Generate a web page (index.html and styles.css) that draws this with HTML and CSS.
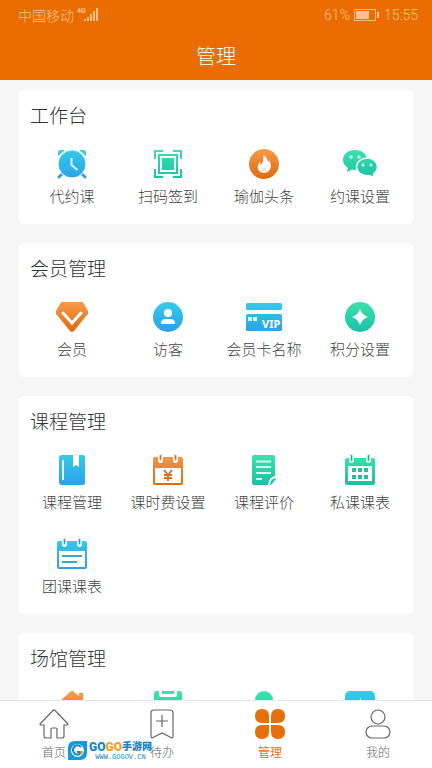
FILE: index.html
```html
<!DOCTYPE html>
<html lang="zh-CN">
<head>
<meta charset="utf-8">
<meta name="viewport" content="width=device-width, initial-scale=1">
<title>管理</title>
<link rel="stylesheet" href="styles.css">
</head>
<body>
<svg class="defs" width="0" height="0" aria-hidden="true">
  <defs>
    <linearGradient id="blue" x1="0" y1="0" x2="0" y2="32" gradientUnits="userSpaceOnUse"><stop offset="0" stop-color="#35cde6"/><stop offset="1" stop-color="#2c9fe8"/></linearGradient>
    <linearGradient id="green" x1="0" y1="0" x2="0" y2="32" gradientUnits="userSpaceOnUse"><stop offset="0" stop-color="#3de3ac"/><stop offset="1" stop-color="#16c1a6"/></linearGradient>
    <linearGradient id="orange" x1="0" y1="0" x2="0" y2="32" gradientUnits="userSpaceOnUse"><stop offset="0" stop-color="#f79c4b"/><stop offset="1" stop-color="#dc690d"/></linearGradient>
  </defs>
</svg>
<div class="app">
  <header class="header">
    <div class="status">
      <span class="carrier">中国移动</span>
      <span class="network">4G</span>
      <svg class="signal" width="14" height="14" viewBox="0 0 14 14" fill="currentColor" aria-hidden="true"><path d="M0 11h2v2H0zM3 9h2v4H3zM6 6h2v7H6zM9 3h2v10H9zM12 0h2v13h-2z"/></svg>
      <span class="percent">61%</span>
      <svg class="battery" width="25" height="12" viewBox="0 0 25 12" aria-hidden="true"><rect x=".5" y=".5" width="21" height="11" fill="none" stroke="currentColor"/><path d="M2 2h13v8H2zM23 3h2v6h-2z" fill="currentColor"/></svg>
      <span class="time">15:55</span>
    </div>
    <h1 class="title">管理</h1>
  </header>

  <main class="content">
    <section class="card">
      <h2>工作台</h2>
      <div class="grid">
        <button class="item" type="button">
          <svg class="icon" viewBox="0 0 32 32" aria-hidden="true"><path d="m7 25-4 4M25 25l4 4" stroke="#2fa6e6" stroke-width="3" stroke-linecap="round"/><path fill="url(#blue)" d="M2 8V5q0-3 3-3h4zM30 8V5q0-3-3-3h-4z"/><circle cx="16" cy="16" r="14" fill="url(#blue)" stroke="#fff"/><path d="M15.500 10v7l6 5" fill="none" stroke="#d8f6ff" stroke-width="2"/></svg>
          <span>代约课</span>
        </button>
        <button class="item" type="button">
          <svg class="icon" viewBox="0 0 32 32" aria-hidden="true"><g fill="none" stroke="url(#green)" stroke-width="2"><path d="M3 11V3h8M21 3h8v8M29 21v8h-8M11 29H3v-8"/><path d="M7 7h18v18H7z"/></g><path fill="url(#green)" d="M10 10h12v12H10z"/></svg>
          <span>扫码签到</span>
        </button>
        <button class="item" type="button">
          <svg class="icon" viewBox="0 0 32 32" aria-hidden="true"><circle cx="16" cy="16" r="15" fill="url(#orange)"/><path fill="#fff" d="M15.500 7q4 3 4.500 7 1-1 1-2 3 5 1 9-2 4-6 4t-6-4q-1-4 2-7 0 2 1 3 3-4 2.500-10z"/><path d="M14 24q-1-2 1-5 1 2 2.500 0 1.500 3 0 5z" fill="#fce2c4"/></svg>
          <span>瑜伽头条</span>
        </button>
        <button class="item" type="button">
          <svg class="icon icon-wide" viewBox="0 0 36 32" aria-hidden="true"><path fill="url(#green)" d="M13 2c7 0 12 4 12 10s-5 10-12 10l-3-.4L5 24l1-4c-3-2-5-5-5-8C1 6 6 2 13 2z"/><path fill="url(#green)" stroke="#fff" stroke-width="1.500" d="M25 10c6 0 10.500 4 10.500 9 0 3-1.500 5-4 7l1 4-5-2.500-2.500.2c-6 0-10.500-4-10.500-8.700S19 10 25 10z"/><g fill="#c9fff0"><circle cx="9" cy="9" r="1.800"/><circle cx="17" cy="9" r="1.800"/><circle cx="21" cy="17" r="1.500"/><circle cx="29" cy="17" r="1.500"/></g></svg>
          <span>约课设置</span>
        </button>
      </div>
    </section>

    <section class="card">
      <h2>会员管理</h2>
      <div class="grid">
        <button class="item" type="button">
          <svg class="icon" viewBox="0 0 32 32" aria-hidden="true"><path fill="url(#orange)" d="M6 1h20q1 0 2 2l4 7q1 2-1 4L18 30q-2 2-4 0L1 14q-2-2-1-4l4-7q1-2 2-2z"/><path d="m7 12 9 10 9-10" fill="none" stroke="#fff" stroke-width="3" stroke-linecap="round"/></svg>
          <span>会员</span>
        </button>
        <button class="item" type="button">
          <svg class="icon" viewBox="0 0 32 32" aria-hidden="true"><circle cx="16" cy="16" r="15" fill="url(#blue)"/><circle cx="16" cy="12" r="4" fill="#fff"/><path d="M9 23v-1q0-4 5-4h4q5 0 5 4v1z" fill="#fff"/></svg>
          <span>访客</span>
        </button>
        <button class="item" type="button">
          <svg class="icon icon-wide" viewBox="0 0 36 32" aria-hidden="true"><rect y="2" width="36" height="7" rx="1.500" fill="url(#blue)"/><rect y="13" width="36" height="17" rx="1.500" fill="url(#blue)"/><path fill="#d9f7ff" d="M2 16h4v4H2zM7 16h4v4H7z"/><text x="16" y="27" class="vip">VIP</text></svg>
          <span>会员卡名称</span>
        </button>
        <button class="item" type="button">
          <svg class="icon" viewBox="0 0 32 32" aria-hidden="true"><circle cx="16" cy="16" r="15" fill="url(#green)"/><path fill="#fff" d="M16 8q2 6 8 8-6 2-8 8-2-6-8-8 6-2 8-8z"/></svg>
          <span>积分设置</span>
        </button>
      </div>
    </section>

    <section class="card">
      <h2>课程管理</h2>
      <div class="grid">
        <button class="item" type="button">
          <svg class="icon" viewBox="0 0 32 32" aria-hidden="true"><path fill="url(#blue)" d="M6 1h11v12l3-2 3 2V1h4q2 0 2 2v26q0 2-2 2H6q-3 0-3-3V4q0-3 3-3z"/><path d="M7 6v20" stroke="#e2f8ff" stroke-width="2"/></svg>
          <span>课程管理</span>
        </button>
        <button class="item" type="button">
          <svg class="icon" viewBox="0 0 32 32" aria-hidden="true"><path fill="url(#orange)" fill-rule="evenodd" d="M3 3h3v3q0 3 2.500 3T11 6V3h10v3q0 3 2.500 3T26 6V3h3q2 0 2 2v24q0 2-2 2H3q-2 0-2-2V5q0-2 2-2zm0 11v15h26V14z"/><path d="M8 1h1v5H8zM23 1h1v5h-1z" stroke="#f6964a"/><path d="m12 16 4 5 4-5M12 21h8M12 24h8M16 21v6" fill="none" stroke="#cf752a" stroke-width="2"/></svg>
          <span>课时费设置</span>
        </button>
        <button class="item" type="button">
          <svg class="icon" viewBox="0 0 32 32" aria-hidden="true"><path fill="url(#green)" d="M6 1h19q2 0 2 2v19q-6 1-7 9H6q-2 0-2-2V3q0-2 2-2z"/><path fill="url(#green)" d="M28 24v1l-5 6h-1q0-6 6-7z"/><path d="M8 7.500h15M8 13h15M8 19h15M8 25h6" stroke="#d4fff1" stroke-width="2"/></svg>
          <span>课程评价</span>
        </button>
        <button class="item" type="button">
          <svg class="icon" viewBox="0 0 32 32" aria-hidden="true"><path fill="url(#green)" fill-rule="evenodd" d="M3 4h2v2q0 3 2.500 3T10 6V4h12v2q0 3 2.500 3T27 6V4h2q2 0 2 2v23q0 2-2 2H3q-2 0-2-2V6q0-2 2-2zm1 8v15h24V12z"/><path d="M7 1h1v6H7zM24 1h1v6h-1z" stroke="#38dfab"/><path fill="#2bbba0" d="M8 14h4v4H8zm6 0h4v4h-4zm6 0h4v4h-4zM8 21h4v4H8zm6 0h4v4h-4zm6 0h4v4h-4z"/></svg>
          <span>私课课表</span>
        </button>
        <button class="item" type="button">
          <svg class="icon" viewBox="0 0 32 32" aria-hidden="true"><path fill="url(#blue)" fill-rule="evenodd" d="M3 3h3v3q0 3 2.500 3T11 6V3h10v3q0 3 2.500 3T26 6V3h3q2 0 2 2v24q0 2-2 2H3q-2 0-2-2V5q0-2 2-2zm0 10v16h26V13z"/><path d="M8 1h1v5H8zM23 1h1v5h-1z" stroke="#35c9e6"/><path d="M6 18h20M6 24h15" stroke="#35a9cf" stroke-width="2"/></svg>
          <span>团课课表</span>
        </button>
      </div>
    </section>

    <section class="card">
      <h2>场馆管理</h2>
      <div class="grid">
        <button class="item" type="button" aria-label="场馆">
          <svg class="icon" viewBox="0 0 32 32" aria-hidden="true"><path fill="url(#orange)" d="M14.500.500q1.500-1 3 0L23 5V2h4v7l5 5h-3v17H3V14H0z"/></svg>
        </button>
        <button class="item" type="button" aria-label="登记">
          <svg class="icon" viewBox="0 0 32 32" aria-hidden="true"><path fill="url(#green)" d="M4 0h3v4q0 2 2 2h14q2 0 2-2V0h3q2 0 2 2v27q0 2-2 2H4q-2 0-2-2V2q0-2 2-2zM10 0h12v3H10z"/></svg>
        </button>
        <button class="item" type="button" aria-label="人员">
          <svg class="icon" viewBox="0 0 32 32" aria-hidden="true"><circle cx="16" cy="9" r="9" fill="url(#green)"/><path fill="url(#green)" d="M1 31q0-11 15-11t15 11z"/></svg>
        </button>
        <button class="item" type="button" aria-label="设置">
          <svg class="icon" viewBox="0 0 32 32" aria-hidden="true"><rect x="1" width="30" height="31" rx="5" fill="url(#blue)"/><path fill="#fff" d="m17 7-6 7h6z"/></svg>
        </button>
      </div>
    </section>
  </main>

  <nav class="tabs">
    <a class="tab" href="#home">
      <svg class="tab-icon" viewBox="0 0 30 30" aria-hidden="true"><path d="M14 1.500q1-1 2 0L29 15q0 1-1 1h-3v11q0 2-2 2h-5v-9q0-1-1-1h-4q-1 0-1 1v9H7q-2 0-2-2V16H2q-1 0-1-1z"/></svg>
      <span>首页</span>
    </a>
    <a class="tab" href="#todo">
      <svg class="tab-icon" viewBox="0 0 30 30" aria-hidden="true"><path d="M7 1h16q3 0 3 3v23q0 3-2 1.500L15 24l-9 4.500Q4 30 4 27V4q0-3 3-3zM9 12h12M15 6v12"/></svg>
      <span>待办</span>
    </a>
    <a class="tab active" href="#manage" aria-current="page">
      <svg class="tab-icon" viewBox="0 0 30 30" aria-hidden="true"><path d="M7 0q7 0 7 7v7H7q-7 0-7-7t7-7zM23 0q7 0 7 7t-7 7h-7V7q0-7 7-7zM7 16h7v7q0 7-7 7t-7-7 7-7zM16 16h7q7 0 7 7t-7 7-7-7z"/></svg>
      <span>管理</span>
    </a>
    <a class="tab" href="#me">
      <svg class="tab-icon" viewBox="0 0 30 30" aria-hidden="true"><circle cx="15" cy="8" r="7"/><rect x="3" y="17" width="24" height="12" rx="6"/></svg>
      <span>我的</span>
    </a>
    <div class="brand">
      <svg width="19" height="19" viewBox="0 0 19 19" aria-hidden="true"><path fill="#1598de" d="M7 0h12v12q0 7-7 7H0V7q0-7 7-7z"/><circle cx="9.500" cy="9.500" r="6.500" fill="#fff"/><path d="M13 6q-3-3-6-1-4 4 0 8 4 2 6-2H9" fill="none" stroke="#1685c7" stroke-width="2"/><path d="m12 10 4 1-3 3z" fill="#f5a01d"/></svg>
      <div class="brand-text">
        <div class="brand-name"><b>GO</b><b class="warm">GO</b><span>手游网</span></div>
        <small>WWW.GOGOV.CN</small>
      </div>
    </div>
  </nav>
</div>
</body>
</html>
```

FILE: styles.css
```css
* {
  box-sizing: border-box;
}

body {
  margin: 0;
  font-family: "Noto Sans CJK SC", sans-serif;
  font-weight: 300;
  color: #333;
  background: #f6f6f7;
}

.defs {
  position: absolute;
}

.app {
  display: flex;
  flex-direction: column;
  height: 100vh;
}

.header {
  flex: none;
  padding-bottom: 6px;
  background: #eb6c00;
  color: #fff;
}

.status {
  display: flex;
  align-items: center;
  height: 30px;
  padding: 0 14px 0 18px;
  color: #ffc08a;
  font-size: 14px;
}

.network {
  align-self: flex-start;
  margin: 6px 0 0 3px;
  font: 700 7px/10px Roboto, sans-serif;
}

.signal {
  margin-left: -2px;
}

.percent {
  margin-left: auto;
}

.percent,
.time {
  font-family: Roboto, sans-serif;
}

.battery {
  margin: 0 5px 0 4px;
}

.title {
  margin: 8px 0 0;
  font-size: 20px;
  font-weight: 300;
  line-height: 36px;
  text-align: center;
}

.content {
  flex: 1;
  display: flex;
  flex-direction: column;
  gap: 19px;
  min-height: 0;
  padding: 10px 18px;
  overflow-y: auto;
  scrollbar-width: none;
}

.card {
  flex: none;
  padding: 12px 6px 18px;
  border-radius: 6px;
  background: #fff;
}

.card h2 {
  margin: 0 0 20px;
  padding-left: 6px;
  font-size: 19px;
  font-weight: 300;
  line-height: 26px;
}

.grid {
  display: grid;
  grid-template-columns: repeat(4, 1fr);
  row-gap: 26px;
}

.item {
  display: flex;
  flex-direction: column;
  align-items: center;
  gap: 6px;
  min-width: 0;
  padding: 0;
  border: 0;
  background: none;
  color: #444;
  font: inherit;
  font-size: 15px;
  line-height: 20px;
  white-space: nowrap;
}

.icon {
  display: block;
  width: 32px;
  height: 32px;
}

.icon-wide {
  width: 36px;
}

.vip {
  fill: #fff;
  font: 700 11px "Noto Sans", sans-serif;
}

.tabs {
  position: relative;
  flex: none;
  display: grid;
  grid-template-columns: repeat(4, 1fr);
  padding: 8px 0 7px;
  border-top: 1px solid #e8e8e8;
  background: #fff;
}

.tab {
  display: flex;
  flex-direction: column;
  align-items: center;
  gap: 4px;
  color: #666;
  font-size: 12px;
  line-height: 18px;
  text-decoration: none;
}

.tab-icon {
  width: 30px;
  height: 30px;
  fill: none;
  stroke: #666;
  stroke-width: 1.2;
}

.active {
  color: #df741b;
  font-weight: 400;
}

.active .tab-icon {
  fill: #e56f0a;
  stroke: none;
}

.brand {
  position: absolute;
  left: 68px;
  bottom: 8px;
  display: flex;
  align-items: center;
  gap: 2px;
}

.brand-text {
  display: flex;
  flex-direction: column;
  color: #1685c7;
}

.brand-name {
  display: flex;
  font: 900 12px/14px Roboto, "Noto Sans CJK SC", sans-serif;
}

.brand-name b {
  font-weight: 900;
}

.brand-name .warm {
  color: #f5a01d;
}

.brand-name span {
  font-size: 10px;
}

.brand small {
  font: 400 7px/6px "Liberation Mono", monospace;
  text-align: center;
}
```
